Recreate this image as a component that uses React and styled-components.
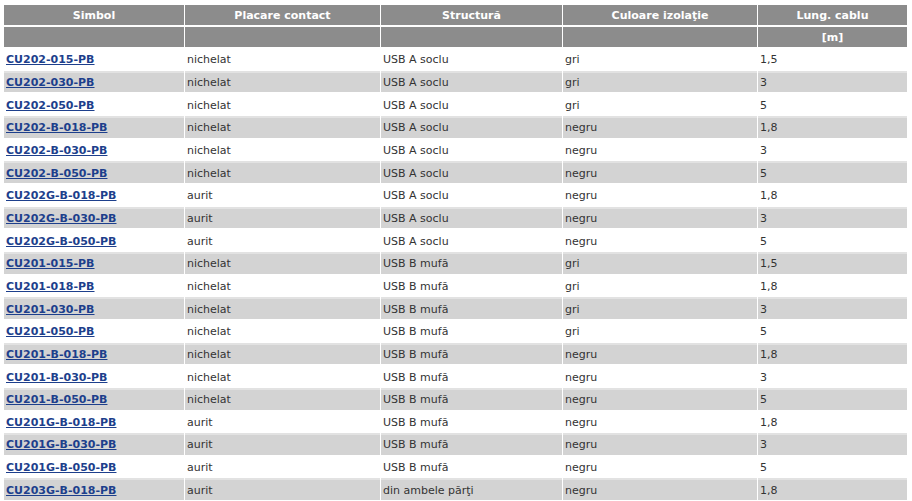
import styled, { createGlobalStyle } from "styled-components";

const rows = [
  ["CU202-015-PB", "nichelat", "USB A soclu", "gri", "1,5"],
  ["CU202-030-PB", "nichelat", "USB A soclu", "gri", "3"],
  ["CU202-050-PB", "nichelat", "USB A soclu", "gri", "5"],
  ["CU202-B-018-PB", "nichelat", "USB A soclu", "negru", "1,8"],
  ["CU202-B-030-PB", "nichelat", "USB A soclu", "negru", "3"],
  ["CU202-B-050-PB", "nichelat", "USB A soclu", "negru", "5"],
  ["CU202G-B-018-PB", "aurit", "USB A soclu", "negru", "1,8"],
  ["CU202G-B-030-PB", "aurit", "USB A soclu", "negru", "3"],
  ["CU202G-B-050-PB", "aurit", "USB A soclu", "negru", "5"],
  ["CU201-015-PB", "nichelat", "USB B mufă", "gri", "1,5"],
  ["CU201-018-PB", "nichelat", "USB B mufă", "gri", "1,8"],
  ["CU201-030-PB", "nichelat", "USB B mufă", "gri", "3"],
  ["CU201-050-PB", "nichelat", "USB B mufă", "gri", "5"],
  ["CU201-B-018-PB", "nichelat", "USB B mufă", "negru", "1,8"],
  ["CU201-B-030-PB", "nichelat", "USB B mufă", "negru", "3"],
  ["CU201-B-050-PB", "nichelat", "USB B mufă", "negru", "5"],
  ["CU201G-B-018-PB", "aurit", "USB B mufă", "negru", "1,8"],
  ["CU201G-B-030-PB", "aurit", "USB B mufă", "negru", "3"],
  ["CU201G-B-050-PB", "aurit", "USB B mufă", "negru", "5"],
  ["CU203G-B-018-PB", "aurit", "din ambele părţi", "negru", "1,8"],
];

const widths = [180, 195, 181, 194, 149];

const GlobalStyle = createGlobalStyle`
  body {
    margin: 0;
    padding: 3px 0 0 3px;
    background: #fff;
    font-family: "DejaVu Sans", Verdana, sans-serif;
  }
`;

export default function App() {
  return (
    <>
      <GlobalStyle />
      <Table>
        <colgroup>
          {widths.map((w, i) => (
            <col key={i} style={{ width: w }} />
          ))}
        </colgroup>
        <thead>
          <tr>
            <HeadCell>Simbol</HeadCell>
            <HeadCell>Placare contact</HeadCell>
            <HeadCell>Structură</HeadCell>
            <HeadCell>Culoare izolaţie</HeadCell>
            <HeadCell>Lung. cablu</HeadCell>
          </tr>
          <tr>
            <HeadCell />
            <HeadCell />
            <HeadCell />
            <HeadCell />
            <HeadCell>[m]</HeadCell>
          </tr>
        </thead>
        <tbody>
          {rows.map((r, i) => (
            <tr key={r[0]}>
              <Cell $shaded={i % 2 === 1}>
                <ProductLink href="#">{r[0]}</ProductLink>
              </Cell>
              {r.slice(1).map((v, j) => (
                <Cell key={j} $shaded={i % 2 === 1}>
                  {v}
                </Cell>
              ))}
            </tr>
          ))}
        </tbody>
      </Table>
    </>
  );
}

const Table = styled.table`
  width: 905px;
  table-layout: fixed;
  border-collapse: separate;
  border-spacing: 1px 2px;
  font-size: 11px;
  color: #333;
`;

const HeadCell = styled.th`
  height: 20px;
  padding: 0 2px;
  background: #8c8c8c;
  color: #fff;
  font-weight: bold;
  text-align: center;
  vertical-align: middle;
  box-sizing: border-box;
`;

const Cell = styled.td`
  height: 20.66px;
  padding: 0 2px;
  box-sizing: border-box;
  vertical-align: middle;
  text-align: left;
  white-space: nowrap;
  background: ${({ $shaded }) => ($shaded ? "#d3d3d3" : "#fff")};
  background-clip: padding-box;
  border-top: 1px solid transparent;
  box-shadow: ${({ $shaded }) => ($shaded ? "0 -1px 0 #e2e2e2" : "none")};
`;

const ProductLink = styled.a`
  color: #1d3f8c;
  font-weight: bold;
  text-decoration: underline;
`;
